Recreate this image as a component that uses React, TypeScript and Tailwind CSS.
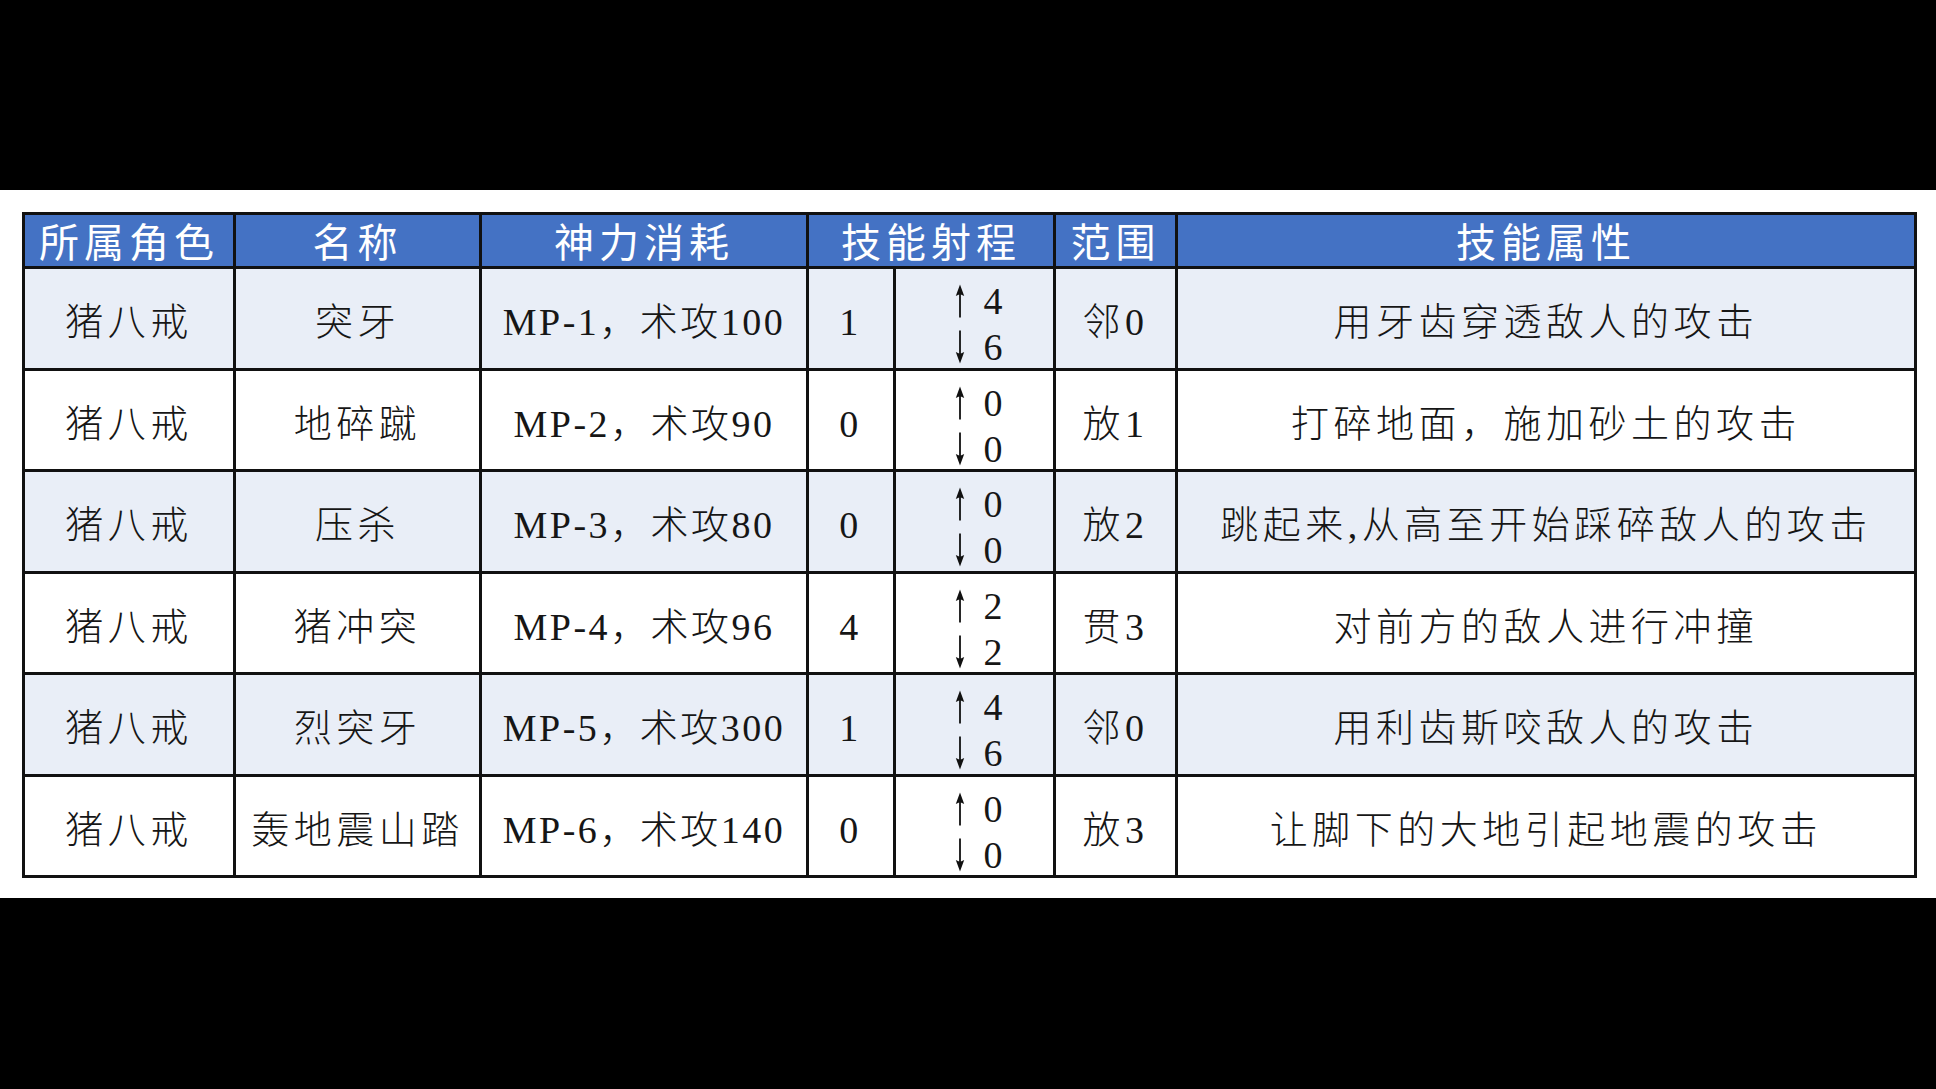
import React from "react";

type Row = {
  role: string;
  name: string;
  cost: string;
  range: string;
  up: string;
  down: string;
  area: string;
  desc: string;
};

const rows: Row[] = [
  { role: "猪八戒", name: "突牙", cost: "MP-1，术攻100", range: "1", up: "4", down: "6", area: "邻0", desc: "用牙齿穿透敌人的攻击" },
  { role: "猪八戒", name: "地碎蹴", cost: "MP-2，术攻90", range: "0", up: "0", down: "0", area: "放1", desc: "打碎地面，施加砂土的攻击" },
  { role: "猪八戒", name: "压杀", cost: "MP-3，术攻80", range: "0", up: "0", down: "0", area: "放2", desc: "跳起来,从高至开始踩碎敌人的攻击" },
  { role: "猪八戒", name: "猪冲突", cost: "MP-4，术攻96", range: "4", up: "2", down: "2", area: "贯3", desc: "对前方的敌人进行冲撞" },
  { role: "猪八戒", name: "烈突牙", cost: "MP-5，术攻300", range: "1", up: "4", down: "6", area: "邻0", desc: "用利齿斯咬敌人的攻击" },
  { role: "猪八戒", name: "轰地震山踏", cost: "MP-6，术攻140", range: "0", up: "0", down: "0", area: "放3", desc: "让脚下的大地引起地震的攻击" },
];

const Arrow = ({ down }: { down?: boolean }) => (
  <svg width="12" height="34" viewBox="0 0 12 34" className={down ? "rotate-180" : ""}>
    <path d="M6 0.5 L10.2 12 L6.9 10.4 L6.9 33.5 L5.1 33.5 L5.1 10.4 L1.8 12 Z" fill="#111" />
  </svg>
);

const th = "h-[54px] p-0 pt-[6px] border-[3px] border-[#111] bg-[#4472c4] text-white text-[40px] leading-none tracking-[5px] font-normal text-center align-middle";
const cell = "h-[101.5px] p-0 pt-[8px] border-[3px] border-[#111] text-[38px] leading-none font-light text-center align-middle";
const td = `${cell} tracking-[4.5px]`;
const tdCost = `${cell} tracking-[2.5px]`;

const App = () => {
  return (
    <div className="w-full h-[1089px] bg-black flex flex-col font-['Liberation_Serif','Noto_Sans_CJK_SC',serif] text-[#161616]">
      <div className="h-[190px] shrink-0" />
      <div className="h-[708px] shrink-0 bg-white p-[22px]">
        <table className="w-full table-fixed border-collapse">
          <colgroup>
            <col className="w-[211px]" />
            <col className="w-[246px]" />
            <col className="w-[327px]" />
            <col className="w-[87px]" />
            <col className="w-[160px]" />
            <col className="w-[122px]" />
            <col className="w-[739px]" />
          </colgroup>
          <thead>
            <tr>
              <th className={th}>所属角色</th>
              <th className={th}>名称</th>
              <th className={th}>神力消耗</th>
              <th className={th} colSpan={2}>技能射程</th>
              <th className={th}>范围</th>
              <th className={th}>技能属性</th>
            </tr>
          </thead>
          <tbody>
            {rows.map((r, i) => (
              <tr key={i} className={i % 2 === 0 ? "bg-[#e9eef7]" : "bg-white"}>
                <td className={td}>{r.role}</td>
                <td className={td}>{r.name}</td>
                <td className={tdCost}>{r.cost}</td>
                <td className={td}>{r.range}</td>
                <td className="h-[101.5px] p-0 border-[3px] border-[#111] align-top">
                  <div className="flex flex-col gap-[10px] pt-[14px] pl-[7px] text-[38px] leading-none">
                    <div className="h-[36px] flex items-center justify-center gap-[18px]">
                      <Arrow />
                      <span>{r.up}</span>
                    </div>
                    <div className="h-[36px] flex items-center justify-center gap-[18px]">
                      <Arrow down />
                      <span>{r.down}</span>
                    </div>
                  </div>
                </td>
                <td className={td}>{r.area}</td>
                <td className={td}>{r.desc}</td>
              </tr>
            ))}
          </tbody>
        </table>
      </div>
      <div className="flex-1" />
    </div>
  );
};

export default App;
